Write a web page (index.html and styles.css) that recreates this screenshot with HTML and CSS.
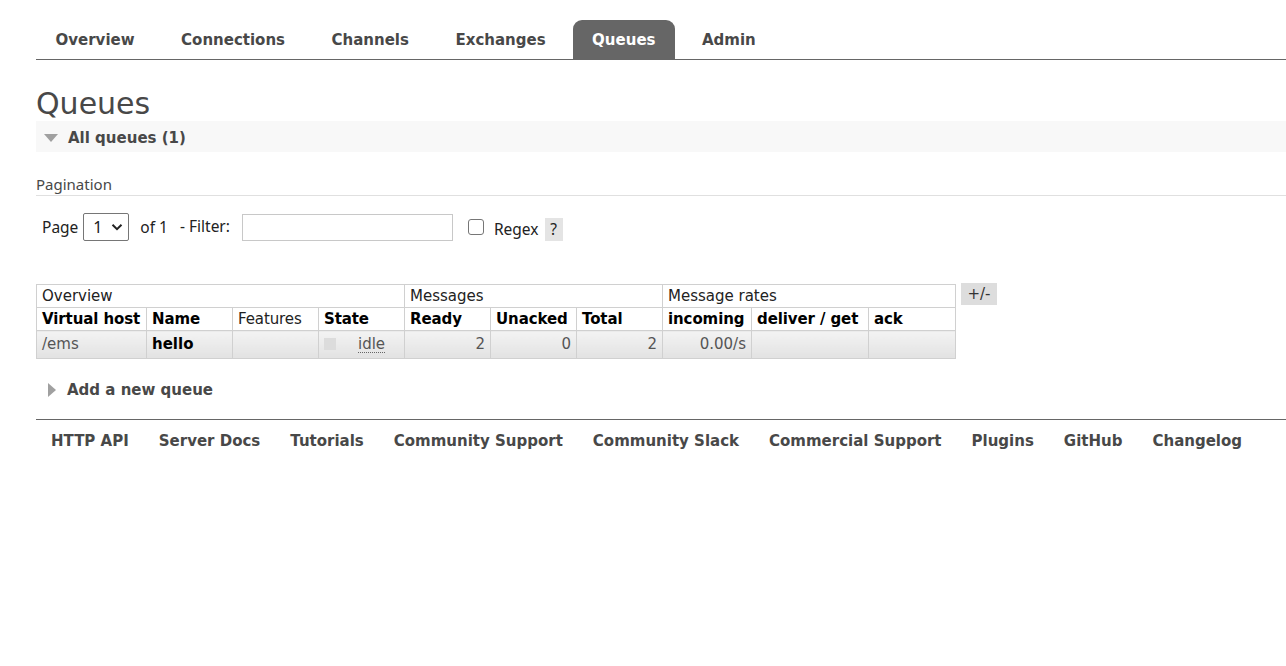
FILE: index.html
```html
<!DOCTYPE html>
<html>
<head>
<meta charset="utf-8">
<link rel="stylesheet" href="styles.css">
</head>
<body>
<div class="header">
  <ul class="menu">
    <li><a class="tab">Overview</a></li>
    <li><a class="tab">Connections</a></li>
    <li><a class="tab">Channels</a></li>
    <li><a class="tab">Exchanges</a></li>
    <li><a class="tab selected">Queues</a></li>
    <li><a class="tab">Admin</a></li>
  </ul>
</div>
<div class="main">
  <h1 class="title">Queues</h1>
  <div class="section-head"><span class="tri-down"></span>All queues (1)</div>
  <div class="pag-title">Pagination</div>
  <div class="pag-row">
    <span class="lbl">Page</span>
    <span class="select"><span class="sel-val">1</span><svg class="chev" width="12" height="8" viewBox="0 0 12 8"><path d="M1.5 1.8 L6 6.2 L10.5 1.8" fill="none" stroke="#222" stroke-width="2"/></svg></span>
    <span class="lbl of">of 1</span>
    <span class="lbl filt">- Filter:</span>
    <span class="input"></span>
    <span class="checkbox"></span>
    <span class="lbl regex">Regex</span>
    <span class="help">?</span>
  </div>
  <div class="table-wrap">
    <table class="list">
      <colgroup>
        <col class="c1"><col class="c2"><col class="c3"><col class="c4"><col class="c5">
        <col class="c6"><col class="c7"><col class="c8"><col class="c9"><col class="c10">
      </colgroup>
      <tr class="group">
        <th colspan="4">Overview</th>
        <th colspan="3">Messages</th>
        <th colspan="3">Message rates</th>
      </tr>
      <tr class="heads">
        <th>Virtual host</th>
        <th>Name</th>
        <th class="normal">Features</th>
        <th>State</th>
        <th>Ready</th>
        <th>Unacked</th>
        <th>Total</th>
        <th>incoming</th>
        <th>deliver / get</th>
        <th>ack</th>
      </tr>
      <tr class="data">
        <td>/ems</td>
        <td class="bold">hello</td>
        <td></td>
        <td class="state"><span class="state-box"></span><span class="idle">idle</span></td>
        <td class="num">2</td>
        <td class="num">0</td>
        <td class="num">2</td>
        <td class="num">0.00/s</td>
        <td></td>
        <td></td>
      </tr>
    </table>
    <span class="plusminus">+/-</span>
  </div>
  <div class="add-head"><span class="tri-right"></span>Add a new queue</div>
</div>
<div class="footer">
  <ul class="foot-links">
    <li>HTTP API</li>
    <li>Server Docs</li>
    <li>Tutorials</li>
    <li>Community Support</li>
    <li>Community Slack</li>
    <li>Commercial Support</li>
    <li>Plugins</li>
    <li>GitHub</li>
    <li>Changelog</li>
  </ul>
</div>
</body>
</html>
```
FILE: styles.css
```css
body {
  margin: 0;
  font-family: "DejaVu Sans", Verdana, sans-serif;
  font-size: 15px;
  color: #484848;
  background: #fff;
}
.header {
  padding-top: 20px;
}
.menu {
  list-style: none;
  margin: 0 0 0 36px;
  padding: 0;
  display: flex;
  border-bottom: 1px solid #666;
}
.menu li {
  margin-right: 7.5px;
}
.tab {
  display: block;
  padding: 2px 19.5px 0;
  height: 37px;
  line-height: 37px;
  font-weight: bold;
  color: #484848;
}
.tab.selected {
  background: #666;
  color: #fff;
  border-radius: 9px 9px 0 0;
}
.main {
  margin-left: 36px;
}
.title {
  margin: 26px 0 0;
  font-size: 30px;
  font-weight: normal;
  line-height: 35px;
  color: #484848;
}
.section-head {
  box-sizing: border-box;
  background: #f8f8f8;
  height: 31px;
  padding-top: 3px;
  font-weight: bold;
  display: flex;
  align-items: center;
}
.tri-down {
  width: 0;
  height: 0;
  border-left: 7px solid transparent;
  border-right: 7px solid transparent;
  border-top: 8px solid #a0a0a0;
  margin: 0 10px 0 8px;
}
.pag-title {
  margin-top: 22px;
  height: 21px;
  line-height: 21px;
  border-bottom: 1px solid #e0e0e0;
  font-family: "Noto Sans", "Open Sans", sans-serif;
  font-size: 15px;
  color: #484848;
}
.pag-row {
  display: flex;
  align-items: center;
  height: 28px;
  margin-top: 17px;
  padding-left: 6px;
  font-family: "Noto Sans", "Open Sans", sans-serif;
  font-size: 15.5px;
  color: #222;
}
.lbl {
  white-space: nowrap;
}
.select {
  box-sizing: border-box;
  width: 46px;
  height: 28px;
  border: 1px solid #767676;
  border-radius: 2px;
  margin-left: 5px;
  display: flex;
  align-items: center;
  padding-left: 9px;
  gap: 8px;
  font-size: 16px;
  color: #222;
}
.sel-val {
  color: #1a1a1a;
}
.of {
  margin-left: 11px;
}
.filt {
  margin-left: 12px;
  position: relative;
  top: -1px;
}
.input {
  box-sizing: border-box;
  width: 211px;
  height: 27px;
  border: 1px solid #c8c8c8;
  margin-left: 12px;
  background: #fff;
}
.checkbox {
  box-sizing: border-box;
  width: 16px;
  height: 16px;
  border: 1px solid #767676;
  border-radius: 3px;
  margin-left: 15px;
}
.regex {
  margin-left: 10px;
  margin-top: 4px;
}
.help {
  margin-left: 6px;
  margin-top: 5px;
  width: 18px;
  height: 23px;
  line-height: 23px;
  text-align: center;
  background: #e4e4e4;
}
.table-wrap {
  display: flex;
  align-items: flex-start;
  margin-top: 43px;
}
table.list {
  border-collapse: collapse;
  table-layout: fixed;
  width: 920px;
  color: #111;
}
table.list th,
table.list td {
  border: 1px solid #d0d0d0;
  padding: 0 5px;
  text-align: left;
  white-space: nowrap;
}
tr.group th {
  font-weight: normal;
  height: 21px;
  line-height: 21px;
  padding-top: 1px;
  color: #222;
}
tr.heads th {
  height: 22px;
  line-height: 22px;
  font-weight: bold;
  color: #000;
  letter-spacing: -0.1px;
}
tr.heads th.normal {
  font-weight: normal;
  color: #222;
}
col.c1 { width: 110px; }
col.c2 { width: 86px; }
col.c3 { width: 86px; }
col.c4 { width: 86px; }
col.c5 { width: 86px; }
col.c6 { width: 86px; }
col.c7 { width: 86px; }
col.c8 { width: 89px; }
col.c9 { width: 117px; }
col.c10 { width: 87px; }
tr.data td {
  height: 27px;
  line-height: 27px;
  background: linear-gradient(#f3f3f3, #e2e2e2);
  color: #555;
}
tr.data td.bold {
  font-weight: bold;
  color: #000;
}
tr.data td.num {
  text-align: right;
}
.state-box {
  display: inline-block;
  width: 12px;
  height: 12px;
  background: #dcdcdc;
  vertical-align: middle;
  margin-right: 22px;
  position: relative;
  top: -1px;
}
.idle {
  border-bottom: 1px dotted #666;
  line-height: 16px;
  display: inline-block;
}
.plusminus {
  margin-left: 5px;
  margin-top: -1px;
  width: 36px;
  height: 22px;
  line-height: 22px;
  text-align: center;
  background: #ddd;
  color: #333;
}
.add-head {
  margin-top: 19px;
  height: 24px;
  display: flex;
  align-items: center;
  font-weight: bold;
}
.tri-right {
  width: 0;
  height: 0;
  border-top: 7px solid transparent;
  border-bottom: 7px solid transparent;
  border-left: 8px solid #a0a0a0;
  margin: 0 11px 0 12px;
}
.footer {
  margin: 17px 0 0 36px;
  border-top: 1px solid #666;
}
.foot-links {
  list-style: none;
  margin: 0;
  padding: 0;
  display: flex;
}
.foot-links li {
  padding: 1px 15px 0;
  height: 41px;
  line-height: 41px;
  font-weight: bold;
  color: #484848;
}
```
